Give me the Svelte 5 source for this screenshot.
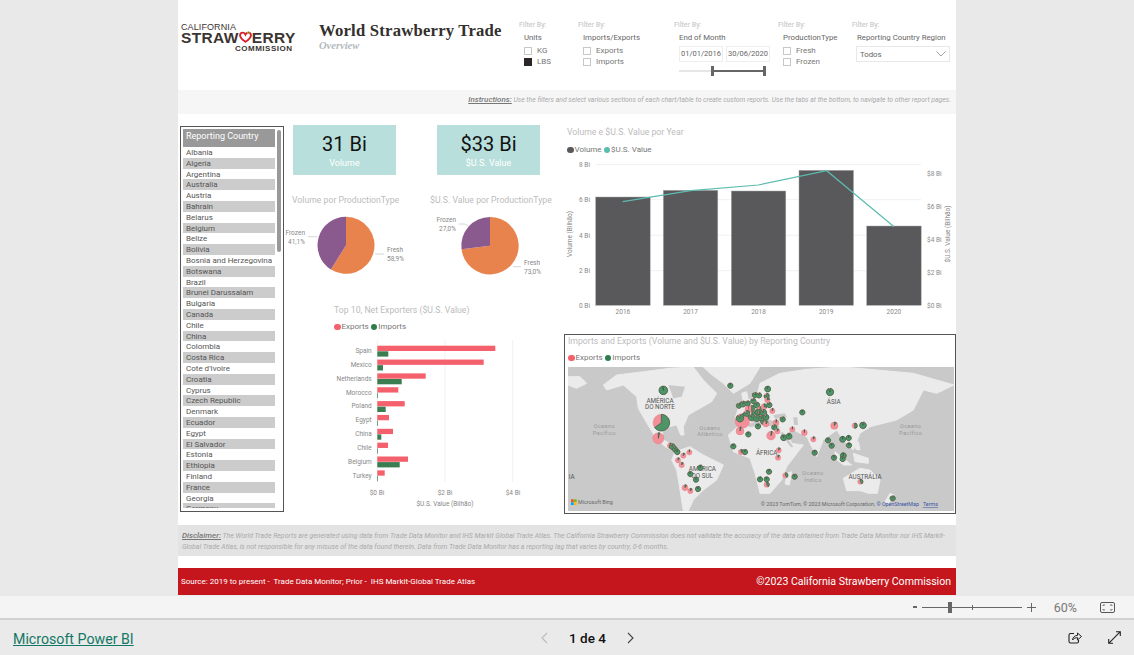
<script lang="ts">
  const countries = ['Albania','Algeria','Argentina','Australia','Austria','Bahrain','Belarus','Belgium','Belize','Bolivia','Bosnia and Herzegovina','Botswana','Brazil','Brunei Darussalam','Bulgaria','Canada','Chile','China','Colombia','Costa Rica',"Cote d'Ivoire",'Croatia','Cyprus','Czech Republic','Denmark','Ecuador','Egypt','El Salvador','Estonia','Ethiopia','Finland','France','Georgia','Germany'];

  const years = [
    { year: 2016, x: 595.7, top: 197 },
    { year: 2017, x: 663.3, top: 190.3 },
    { year: 2018, x: 731.3, top: 191 },
    { year: 2019, x: 799, top: 170.3 },
    { year: 2020, x: 866.7, top: 226 }
  ];
  const valueLine = '622.7,201.7 690.7,190.7 758.3,185 826.7,170.7 894,226.7';
  const volTicks = [['8 Bi',164.7],['6 Bi',199.7],['4 Bi',235.3],['2 Bi',270.7],['0 Bi',305.3]];
  const usdTicks = [['$8 Bi',173.7],['$6 Bi',206.3],['$4 Bi',239.3],['$2 Bi',272.3],['$0 Bi',305.7]];

  // name, export end x, import end x (page px)
  const exporters = [
    ['Spain',495.3,388.3],['Mexico',483.7,383],['Netherlands',425.7,401.7],['Morocco',398.3,378],['Poland',404.7,385.7],
    ['Egypt',389,378],['China',393,381.3],['Chile',388,378],['Belgium',408,399.7],['Turkey',384.7,378]
  ];

  // map markers, in the map's own units: x, y, r, share of imports
  const markers = [
    [310,181,13,.97],[304,278,25,.65],[295,325,17,.04],[330,347,8,.4],[337,350,9,.9],[345,358,8,.9],[352,366,8,.95],[388,367,8,.02],
    [370,377,8,.1],[354,391,8,.1],[365,405,8,.1],[421,413,8,.95],[391,432,8,.95],[408,449,8,.95],[375,473,9,.1],[391,483,8,.1],[414,477,8,.95],
    [511,167,8,.95],[623,177,9,.95],[810,186,11,.95],[727,247,8,.95],[547,273,22,.05],[540,265,11,.9],[540,303,12,.05],
    [537,227,8,.9],[549,222,9,.9],[563,220,8,.9],[580,213,8,.9],[585,195,8,.9],[597,196,8,.9],[620,198,8,.8],[622,210,8,.2],[566,238,11,.2],
    [575,235,9,.5],[590,225,9,.9],[600,240,10,.8],[612,230,9,.3],[628,225,8,.9],[637,243,8,.05],[585,250,10,.9],[598,255,10,.9],[610,248,10,.9],
    [560,250,9,.8],[575,262,10,.9],[590,265,10,.9],[605,265,9,.9],[618,262,9,.9],[610,275,8,.9],[618,282,9,.1],[594,289,8,.95],
    [565,313,8,.95],[633,317,13,.05],[648,278,9,.05],[643,292,8,.9],[652,304,8,.1],[668,268,8,.9],[671,323,9,.95],[687,319,9,.97],
    [697,298,8,.02],[733,308,9,.02],[760,328,8,.1],[520,349,8,.95],[543,366,8,.3],[555,366,8,.95],[656,361,8,.1],[654,383,8,.1],[764,368,8,.95],
    [804,331,8,.95],[815,347,8,.95],[848,328,9,.98],[866,324,8,.98],[867,346,8,.98],[823,287,11,.1],[884,287,8,.5],[909,286,10,.95],
    [822,383,8,.95],[850,377,9,.98],[848,387,8,.95],[627,425,8,.95],[600,448,8,.95],[620,448,8,.95],[620,464,8,.4],[676,436,8,.4],
    [704,440,8,.95],[901,455,8,.4],[998,505,8,.9]
  ];

  const mapLabels = [
    ['AMÉRICA',300,219,'place'],['DO NORTE',300,238,'place'],['ÁSIA',821,221,'place'],['ÁFRICA',620,376,'place'],
    ['AMÉRICA',427,423,'place'],['DO SUL',427,443,'place'],['AUSTRÁLIA',915,448,'place'],['IA',35,448,'place'],
    ['Oceano',133,295,'sea'],['Pacífico',133,314,'sea'],['Oceano',450,299,'sea'],['Atlântico',450,318,'sea'],
    ['Oceano',759,435,'sea'],['Índico',759,455,'sea'],['Oceano',1052,295,'sea'],['Pacífico',1052,314,'sea']
  ];

  // wedge clockwise from 12 o'clock
  function wedge(cx: number, cy: number, r: number, from: number, to: number) {
    const a = (from * 2 - 0.5) * Math.PI;
    const b = (to * 2 - 0.5) * Math.PI;
    const large = to - from > 0.5 ? 1 : 0;
    return `M${cx} ${cy}L${cx + r * Math.cos(a)} ${cy + r * Math.sin(a)}A${r} ${r} 0 ${large} 1 ${cx + r * Math.cos(b)} ${cy + r * Math.sin(b)}Z`;
  }
</script>

<div class="page">
  <div class="report">
    <header class="head">
      <div class="logo">
        <span class="logo-top">CALIFORNIA</span>
        <span class="logo-mid">STRAW<svg class="heart" viewBox="0 0 16 15" width="13" height="12"><path d="M8 13.5C3 10 1.2 7.6 1.2 5.2 1.2 3.2 2.8 2 4.4 2 6 2 7.3 3 8 4.4 8.7 3 10 2 11.6 2c1.6 0 3.2 1.2 3.2 3.2 0 2.4-1.8 4.8-6.800 8.300z" fill="none" stroke="#d8232e" stroke-width="2.400"/><path d="M10 2.500 12 0M11 3l3-1" stroke="#8cc04b" stroke-width="1.200"/></svg>ERRY</span>
        <span class="logo-bot">COMMISSION</span>
      </div>
      <div class="title">
        <h1>World Strawberry Trade</h1>
        <p>Overview</p>
      </div>
      <div class="filter">
        <span class="by">Filter By:</span>
        <span class="name">Units</span>
        <label class="check"><i></i>KG</label>
        <label class="check"><i class="on"></i>LBS</label>
      </div>
      <div class="filter">
        <span class="by">Filter By:</span>
        <span class="name">Imports/Exports</span>
        <label class="check"><i></i>Exports</label>
        <label class="check"><i></i>Imports</label>
      </div>
      <div class="filter">
        <span class="by">Filter By:</span>
        <span class="name">End of Month</span>
        <div class="dates"><span>01/01/2016</span><span>30/06/2020</span></div>
        <div class="range"><b></b></div>
      </div>
      <div class="filter">
        <span class="by">Filter By:</span>
        <span class="name">ProductionType</span>
        <label class="check"><i></i>Fresh</label>
        <label class="check"><i></i>Frozen</label>
      </div>
      <div class="filter">
        <span class="by">Filter By:</span>
        <span class="name">Reporting Country Region</span>
        <div class="select">Todos
          <svg viewBox="0 0 10 6" width="10" height="6"><path d="M.5.5 5 5 9.500.5" fill="none" stroke="#888" stroke-width=".8"/></svg>
        </div>
      </div>
    </header>

    <div class="instructions">
      <u>Instructions:</u> Use the filters and select various sections of each chart/table to create custom reports. Use the tabs at the bottom, to navigate to other report pages.
    </div>

    <main class="main">
      <section class="slicer">
        <div class="slicer-head">Reporting Country</div>
        <div class="slicer-list">
          {#each countries as country, i}
            <div class="row" class:alt={i % 2 === 1}>{country}</div>
          {/each}
        </div>
        <div class="scroll"></div>
      </section>

      <section class="middle">
        <div class="kpis">
          <div class="kpi"><strong>31 Bi</strong><span>Volume</span></div>
          <div class="kpi"><strong>$33 Bi</strong><span>$U.S. Value</span></div>
        </div>
        <div class="pies">
          <div class="pie">
            <h2>Volume por ProductionType</h2>
            <svg viewBox="292 207 138 85" width="138" height="85">
              <path d={wedge(346, 245.3, 28.5, 0, 0.589)} fill="#e9834e" />
              <path d={wedge(346, 245.3, 28.5, 0.589, 1)} fill="#8a5a8f" />
              <path d="M308 236.700h9.500M375 254h9" class="lead" />
              <text x="305" y="235" text-anchor="end">Frozen</text>
              <text x="305" y="244" text-anchor="end">41,1%</text>
              <text x="387" y="252">Fresh</text>
              <text x="387" y="261">58,9%</text>
            </svg>
          </div>
          <div class="pie">
            <h2>$U.S. Value por ProductionType</h2>
            <svg viewBox="430 207 126 85" width="126" height="85">
              <path d={wedge(490, 245.7, 28.7, 0, 0.73)} fill="#e9834e" />
              <path d={wedge(490, 245.7, 28.7, 0.73, 1)} fill="#8a5a8f" />
              <path d="M458.700 224h6l4 2M513 266.700h8" class="lead" />
              <text x="456" y="222" text-anchor="end">Frozen</text>
              <text x="456" y="231" text-anchor="end">27,0%</text>
              <text x="524" y="265">Fresh</text>
              <text x="524" y="274">73,0%</text>
            </svg>
          </div>
        </div>
        <div class="top10">
          <h2>Top 10, Net Exporters ($U.S. Value)</h2>
          <div class="legend"><span class="dot red"></span>Exports <span class="dot green"></span>Imports</div>
          <svg viewBox="292 337 264 173" width="264" height="173">
            <path d="M377.300 340v142M445 340v142M512.700 340v142" class="grid" />
            {#each exporters as [name, ex, im], i}
              <text x="371.700" y={353 + i * 13.85} text-anchor="end">{name}</text>
              <rect x="377.300" y={345.700 + i * 13.85} width={ex - 377.3} height="5.300" fill="#f4606c" />
              <rect x="377.300" y={351.300 + i * 13.85} width={im - 377.3} height="5.300" fill="#3a7d50" />
            {/each}
            <text x="377" y="495" text-anchor="middle">$0 Bi</text>
            <text x="445" y="495" text-anchor="middle">$2 Bi</text>
            <text x="513" y="495" text-anchor="middle">$4 Bi</text>
            <text x="445" y="506" text-anchor="middle">$U.S. Value (Bilhão)</text>
          </svg>
        </div>
      </section>

      <section class="right">
        <div class="combo">
          <h2>Volume e $U.S. Value por Year</h2>
          <div class="legend"><span class="dot slate"></span>Volume <span class="dot teal"></span>$U.S. Value</div>
          <svg viewBox="564 155 392 165" width="392" height="165">
            <path d="M595.700 164.700H921M595.700 199.700H921M595.700 235.300H921M595.700 270.700H921" class="grid" />
            {#each volTicks as [label, y]}
              <text x="590" y={+y + 2.5} text-anchor="end">{label}</text>
            {/each}
            {#each usdTicks as [label, y]}
              <text x="927" y={+y + 2.5}>{label}</text>
            {/each}
            {#each years as bar}
              <rect x={bar.x} y={bar.top} width="54.500" height={305.3 - bar.top} fill="#59595b" stroke="#a8a8a8" stroke-width=".5" />
              <text x={bar.x + 27.2} y="314" text-anchor="middle">{bar.year}</text>
            {/each}
            <polyline points={valueLine} fill="none" stroke="#5dbcb0" stroke-width="1.200" />
            <text transform="translate(572 234) rotate(-90)" text-anchor="middle">Volume (Bilhão)</text>
            <text transform="translate(950 234) rotate(-90)" text-anchor="middle">$U.S. Value (Bilhão)</text>
          </svg>
        </div>

        <div class="mapbox">
          <h2>Imports and Exports (Volume and $U.S. Value) by Reporting Country</h2>
          <div class="legend"><span class="dot red"></span>Exports <span class="dot green"></span>Imports</div>
          <svg class="map" viewBox="24 111 1158 432" width="386" height="144">
            <rect x="24" y="111" width="1158" height="432" fill="#c9c9c9" />
            <g fill="#ebebeb" stroke="#ebebeb" stroke-width="3" stroke-linejoin="round">
              <path d="M130 165 170 135 250 125 330 115 400 111 430 150 470 190 455 215 420 235 385 255 370 290 372 315 362 315 350 285 310 295 305 325 345 352 340 362 315 350 285 320 255 270 235 235 230 200 190 165 140 180Z" />
              <path d="M430 111H600L570 160 520 190 490 160 450 130Z" />
              <path d="M345 365 390 350 430 375 490 405 470 450 430 480 400 510 385 543 370 543 360 480 350 420 335 390Z" />
              <path d="M505 315 550 275 620 285 680 300 695 340 730 345 680 410 665 450 630 490 600 490 585 430 570 385 520 365Z" />
              <path d="M525 265 540 220 590 200 600 160 660 130 740 118 850 111 1060 130 1182 165 1130 190 1090 180 1060 240 1010 270 930 290 900 310 880 360 850 330 830 300 790 330 770 380 740 320 700 300 670 308 650 275 610 262 580 268 560 285Z" />
              <path d="M545 190 560 185 565 210 550 215Z" />
              <path d="M915 265 932 255 925 295 908 300Z" />
              <path d="M825 365 850 385 875 405 850 405 825 385ZM880 370 925 385 925 400 885 395ZM885 340 895 335 900 360 888 358Z" />
              <path d="M850 445 900 415 930 420 960 450 952 490 925 490 900 482 860 482Z" />
              <path d="M682 430 695 425 688 465 675 462Z" />
              <path d="M990 490 1002 495 985 520 975 515Z" />
              <path d="M24 140H60L80 160 50 175 24 165Z" />
            </g>
            <g fill="#c9c9c9">
              <path d="M325 165 375 170 365 200 340 205Z" />
              <path d="M560 282 610 272 655 282 650 290 600 285 570 292Z" />
              <path d="M640 255 675 250 680 262 645 266Z" />
              <path d="M668 305 700 350 693 352 660 310Z" />
              <path d="M700 262 712 262 714 285 702 285Z" />
              <path d="M715 312 745 328 735 332 712 320Z" />
              <path d="M790 330 810 338 800 362 790 350Z" />
            </g>
            {#each mapLabels as [text, x, y, kind]}
              <text {x} {y} text-anchor="middle" class={kind}>{text}</text>
            {/each}
            {#each markers as [x, y, r, share]}
              <circle cx={x} cy={y} {r} fill="#f28f98" stroke="#e0707c" stroke-width="1" />
              <path d={wedge(x, y, r, 0, share)} fill="#4f9468" stroke="#1f4f30" stroke-width="1.600" />
            {/each}
            <g>
              <rect x="33" y="508" width="8" height="8" fill="#f25022" /><rect x="42" y="508" width="8" height="8" fill="#7fba00" />
              <rect x="33" y="517" width="8" height="8" fill="#00a4ef" /><rect x="42" y="517" width="8" height="8" fill="#ffb900" />
              <text x="54" y="523" class="tiny">Microsoft Bing</text>
            </g>
            <text x="602" y="528" class="tiny">© 2023 TomTom, © 2023 Microsoft Corporation, <tspan fill="#3a55a5">© OpenStreetMap</tspan><tspan fill="#3a55a5" dx="12" text-decoration="underline">Terms</tspan></text>
          </svg>
        </div>
      </section>
    </main>

    <div class="disclaimer">
      <u>Disclaimer:</u> The World Trade Reports are generated using data from Trade Data Monitor and IHS Markit Global Trade Atlas. The California Strawberry Commission does not validate the accuracy of the data obtained from Trade Data Monitor nor IHS Markit-<br />Global Trade Atlas, is not responsible for any misuse of the data found therein. Data from Trade Data Monitor has a reporting lag that varies by country, 0-6 months.
    </div>

    <footer class="redbar">
      <span class="source">Source: 2019 to present -  Trade Data Monitor; Prior -  IHS Markit-Global Trade Atlas</span>
      <span class="copy">©2023 California Strawberry Commission</span>
    </footer>
  </div>

  <div class="zoombar">
    <span class="minus"></span>
    <div class="zoomtrack"><i class="tick"></i><i class="thumb"></i></div>
    <svg class="plus" viewBox="0 0 9 9" width="9" height="9"><path d="M4.500 0v9M0 4.500h9" stroke="#666" stroke-width="1"/></svg>
    <span class="pct">60%</span>
    <svg viewBox="0 0 15 11" width="15" height="11"><rect x=".5" y=".5" width="14" height="10" rx="1.500" fill="none" stroke="#555"/><path d="M3 4V3h2M12 4V3h-2M3 7v1h2M12 7v1h-2" fill="none" stroke="#555" stroke-width=".8"/></svg>
  </div>

  <nav class="bottom">
    <a href="#top">Microsoft Power BI</a>
    <div class="pager">
      <svg viewBox="0 0 7 12" width="7" height="12"><path d="M6 1 1 6l5 5" fill="none" stroke="#bbb" stroke-width="1.100"/></svg>
      <span>1 de 4</span>
      <svg viewBox="0 0 7 12" width="7" height="12"><path d="m1 1 5 5-5 5" fill="none" stroke="#444" stroke-width="1.100"/></svg>
    </div>
    <div class="actions">
      <svg viewBox="0 0 14 13" width="14" height="13"><path d="M6 2.500H2.500a1.500 1.500 0 0 0-1.500 1.500v6.500a1.500 1.500 0 0 0 1.500 1.500h6.500a1.500 1.500 0 0 0 1.500-1.500V9" fill="none" stroke="#222" stroke-width="1.100"/><path d="M4.500 9c.3-2.800 2.200-4.500 5-4.600V2l4 3.500-4 3.500V6.700c-2 0-3.700.6-5 2.300z" fill="none" stroke="#222" stroke-width="1"/></svg>
      <svg viewBox="0 0 13 13" width="13" height="13"><path d="M8 .7h4.300V5M12.300.7.700 12.300M.700 8v4.300H5" fill="none" stroke="#222" stroke-width="1.100"/></svg>
    </div>
  </nav>
</div>

<style>
  :global(body) {
    margin: 0;
    background: #e9e9e9;
  }

  .page {
    width: 1134px;
    height: 655px;
    overflow: hidden;
    font-family: Roboto, 'Noto Sans', sans-serif;
    color: #666;
  }

  .report {
    width: 778px;
    height: 595px;
    margin: 0 auto;
    background: #fff;
    display: flex;
    flex-direction: column;
  }

  /* header */
  .head {
    height: 90px;
    box-sizing: border-box;
    padding: 21px 0 0 3px;
    display: grid;
    grid-template-columns: 138px 200px 59px 96px 104px 74px 1fr;
  }

  .logo {
    display: flex;
    flex-direction: column;
    color: #3b3431;
    font-family: 'Liberation Sans', sans-serif;
    line-height: 1;
  }

  .logo-top {
    font-size: 9px;
    margin-top: 2px;
    letter-spacing: 0.1px;
  }

  .logo-mid {
    height: 13px;
    line-height: 13px;
    font-size: 15.5px;
    font-weight: 700;
    letter-spacing: 0.35px;
    margin-top: -1px;
    display: flex;
    align-items: center;
  }

  .heart {
    margin: -2px 0 0 0;
  }

  .logo-bot {
    font-size: 8px;
    font-weight: 700;
    letter-spacing: 0.5px;
    margin: 1px 0 0 54px;
  }

  .title h1 {
    margin: 0;
    font: 700 16.7px 'Liberation Serif', serif;
    color: #33302e;
    line-height: 20px;
    white-space: nowrap;
    letter-spacing: 0.2px;
  }

  .title p {
    margin: 0;
    font: italic 700 10.5px 'Liberation Serif', serif;
    color: #b3b9be;
    line-height: 10px;
  }

  .filter {
    display: flex;
    flex-direction: column;
    font-size: 7.8px;
    line-height: 11px;
  }

  .by {
    font-size: 7px;
    font-weight: 500;
    color: #ccc;
    line-height: 8px;
  }

  .name {
    margin: 3px 0 3px 5px;
    color: #666;
  }

  .name + .check {
    margin-top: -1px;
  }

  .check {
    display: flex;
    align-items: center;
    gap: 5px;
    margin-left: 5px;
    height: 11px;
    color: #777;
    font-size: 8px;
  }

  .check i {
    width: 6px;
    height: 6px;
    border: 1px solid #c8c8c8;
  }

  .check i.on {
    background: #2a2526;
    border-color: #2a2526;
  }

  .dates {
    display: flex;
    gap: 3px;
    margin-left: 5px;
  }

  .dates span {
    width: 44px;
    height: 16px;
    box-sizing: border-box;
    border: 1px solid #eee;
    font-size: 7.5px;
    line-height: 14px;
    text-align: center;
  }

  .range {
    margin: 8px 0 0 5px;
    width: 86px;
    height: 2px;
    background: #e6e6e6;
    display: flex;
    justify-content: flex-end;
    position: relative;
  }

  .range b {
    display: block;
    width: 53px;
    height: 2px;
    background: #666;
    position: relative;
  }

  .range b::before,
  .range b::after {
    content: '';
    position: absolute;
    top: -4px;
    width: 3px;
    height: 10px;
    background: #666;
  }

  .range b::before { left: -1px; }
  .range b::after { right: -1px; }

  .select {
    margin: 0 6px 0 4px;
    height: 16px;
    box-sizing: border-box;
    border: 1px solid #e8e8e8;
    padding: 0 3px;
    display: flex;
    align-items: center;
    justify-content: space-between;
  }

  .instructions {
    height: 24px;
    background: #f6f6f6;
    padding-right: 5px;
    text-align: right;
    font-size: 6.83px;
    font-style: italic;
    line-height: 19px;
    color: #aaa;
    white-space: nowrap;
  }

  .instructions u,
  .disclaimer u {
    font-size: 8px;
    font-weight: 500;
    color: #777;
  }

  /* main grid */
  .main {
    height: 411px;
    padding-left: 2px;
    display: grid;
    grid-template-columns: 112px 272px 392px;
  }

  h2 {
    margin: 0;
    font-size: 8.7px;
    font-weight: 400;
    color: #bcbcbc;
    white-space: nowrap;
    line-height: 14px;
  }

  svg text {
    font-size: 6.5px;
    fill: #888;
  }

  .slicer {
    margin-top: 12px;
    width: 104px;
    height: 386px;
    box-sizing: border-box;
    border: 1px solid #555;
    padding: 2px 0 3px 2px;
    position: relative;
    display: flex;
    flex-direction: column;
  }

  .slicer-head {
    width: 92px;
    height: 18px;
    box-sizing: border-box;
    padding-left: 3px;
    background: #999;
    color: #fff;
    font-size: 9px;
    line-height: 14px;
    flex: none;
  }

  .slicer-list {
    overflow: hidden;
    flex: 1;
  }

  .row {
    width: 92px;
    height: 10.8px;
    box-sizing: border-box;
    padding-left: 3px;
    font-size: 8px;
    line-height: 11px;
    color: #555;
    white-space: nowrap;
  }

  .row.alt {
    background: #ccc;
  }

  .scroll {
    position: absolute;
    top: 3px;
    right: 2px;
    width: 4px;
    height: 122px;
    background: #999;
    border-radius: 2px;
  }

  .middle {
    padding: 11px 0 0 1px;
    display: flex;
    flex-direction: column;
  }

  .kpis {
    display: flex;
    gap: 41px;
  }

  .kpi {
    width: 103px;
    height: 50px;
    background: #b8dfdb;
    display: flex;
    flex-direction: column;
    align-items: center;
    padding-top: 7px;
    box-sizing: border-box;
  }

  .kpi strong {
    font-size: 20px;
    font-weight: 400;
    color: #111;
    line-height: 24px;
  }

  .kpi span {
    font-size: 9px;
    color: #fff;
    line-height: 14px;
  }

  .pies {
    display: flex;
    margin-top: 18px;
    margin-left: -1px;
  }

  .pie {
    width: 138px;
    display: flex;
    flex-direction: column;
  }

  .pie svg {
    overflow: visible;
  }

  .lead {
    fill: none;
    stroke: #bbb;
    stroke-width: 0.6;
  }

  .top10 {
    margin: 11px 0 0 41px;
    display: flex;
    flex-direction: column;
  }

  .top10 svg {
    margin: 5px 0 0 -42px;
  }

  .legend {
    display: flex;
    align-items: center;
    font-size: 8px;
    color: #777;
    line-height: 10px;
    white-space: pre;
  }

  .dot {
    width: 6.5px;
    height: 6.5px;
    border-radius: 50%;
    margin-right: 1px;
  }

  .dot.red { background: #f4606c; }
  .dot.green { background: #2f7d4a; }
  .dot.slate { background: #59595b; }
  .dot.teal { background: #5dbcb0; }

  .top10 .legend {
    margin-top: 5px;
  }

  .right {
    padding-top: 11px;
    display: flex;
    flex-direction: column;
  }

  .combo {
    height: 209px;
    display: flex;
    flex-direction: column;
  }

  .combo h2,
  .combo .legend {
    margin-left: 3px;
  }

  .combo .legend {
    margin-top: 6px;
  }

  .grid {
    stroke: #f1f1f1;
    stroke-width: 1;
    fill: none;
  }

  .mapbox {
    width: 392px;
    height: 180px;
    box-sizing: border-box;
    border: 1px solid #555;
    padding: 0 1px 1px 3px;
    display: flex;
    flex-direction: column;
  }

  .mapbox h2 {
    margin-top: -1px;
  }

  .mapbox .legend {
    margin-top: 4px;
    height: 12px;
  }

  .map {
    display: block;
    margin-top: 3px;
  }

  .map .place {
    font-size: 19px;
    fill: #555;
  }

  .map .sea {
    font-size: 17px;
    fill: #999;
    letter-spacing: 1px;
  }

  .map .tiny {
    font-size: 16px;
    fill: #666;
  }

  .disclaimer {
    height: 31px;
    box-sizing: border-box;
    background: #e3e3e3;
    padding: 5px 4px 0;
    font-size: 6.95px;
    font-style: italic;
    line-height: 11px;
    color: #aaa;
    white-space: nowrap;
  }

  .redbar {
    margin-top: 12px;
    height: 27px;
    background: #c4161c;
    color: #fff;
    display: flex;
    align-items: center;
    justify-content: space-between;
    padding: 0 5px 0 3px;
    white-space: pre;
  }

  .source {
    font-size: 8px;
  }

  .copy {
    font-size: 10.55px;
  }

  /* viewer chrome */
  .zoombar {
    height: 22px;
    margin-top: 1px;
    background: #f4f4f4;
    border-bottom: 2px solid #d0d0d0;
    display: flex;
    align-items: center;
    justify-content: flex-end;
    padding-right: 19px;
  }

  .minus {
    width: 4px;
    height: 2px;
    background: #666;
  }

  .zoomtrack {
    width: 100px;
    height: 1px;
    background: #666;
    margin: 0 5px;
    position: relative;
  }

  .thumb {
    position: absolute;
    left: 26px;
    top: -5px;
    width: 4px;
    height: 11px;
    background: #666;
  }

  .tick {
    position: absolute;
    left: 50px;
    top: -2px;
    width: 1px;
    height: 5px;
    background: #666;
  }

  .pct {
    font-size: 12.5px;
    color: #777;
    margin: 0 23px 0 18px;
  }

  .bottom {
    height: 35px;
    background: #eaeaea;
    position: relative;
    display: flex;
    align-items: center;
    justify-content: space-between;
    padding: 0 13px;
  }

  .bottom a {
    font-size: 14.2px;
    color: #117865;
    text-decoration: underline;
    margin-top: 2px;
  }

  .pager {
    position: absolute;
    left: 541px;
    display: flex;
    align-items: center;
    gap: 21px;
    color: #111;
    font-size: 13.5px;
    font-weight: 500;
  }

  .actions {
    display: flex;
    align-items: center;
    gap: 26px;
  }
</style>
